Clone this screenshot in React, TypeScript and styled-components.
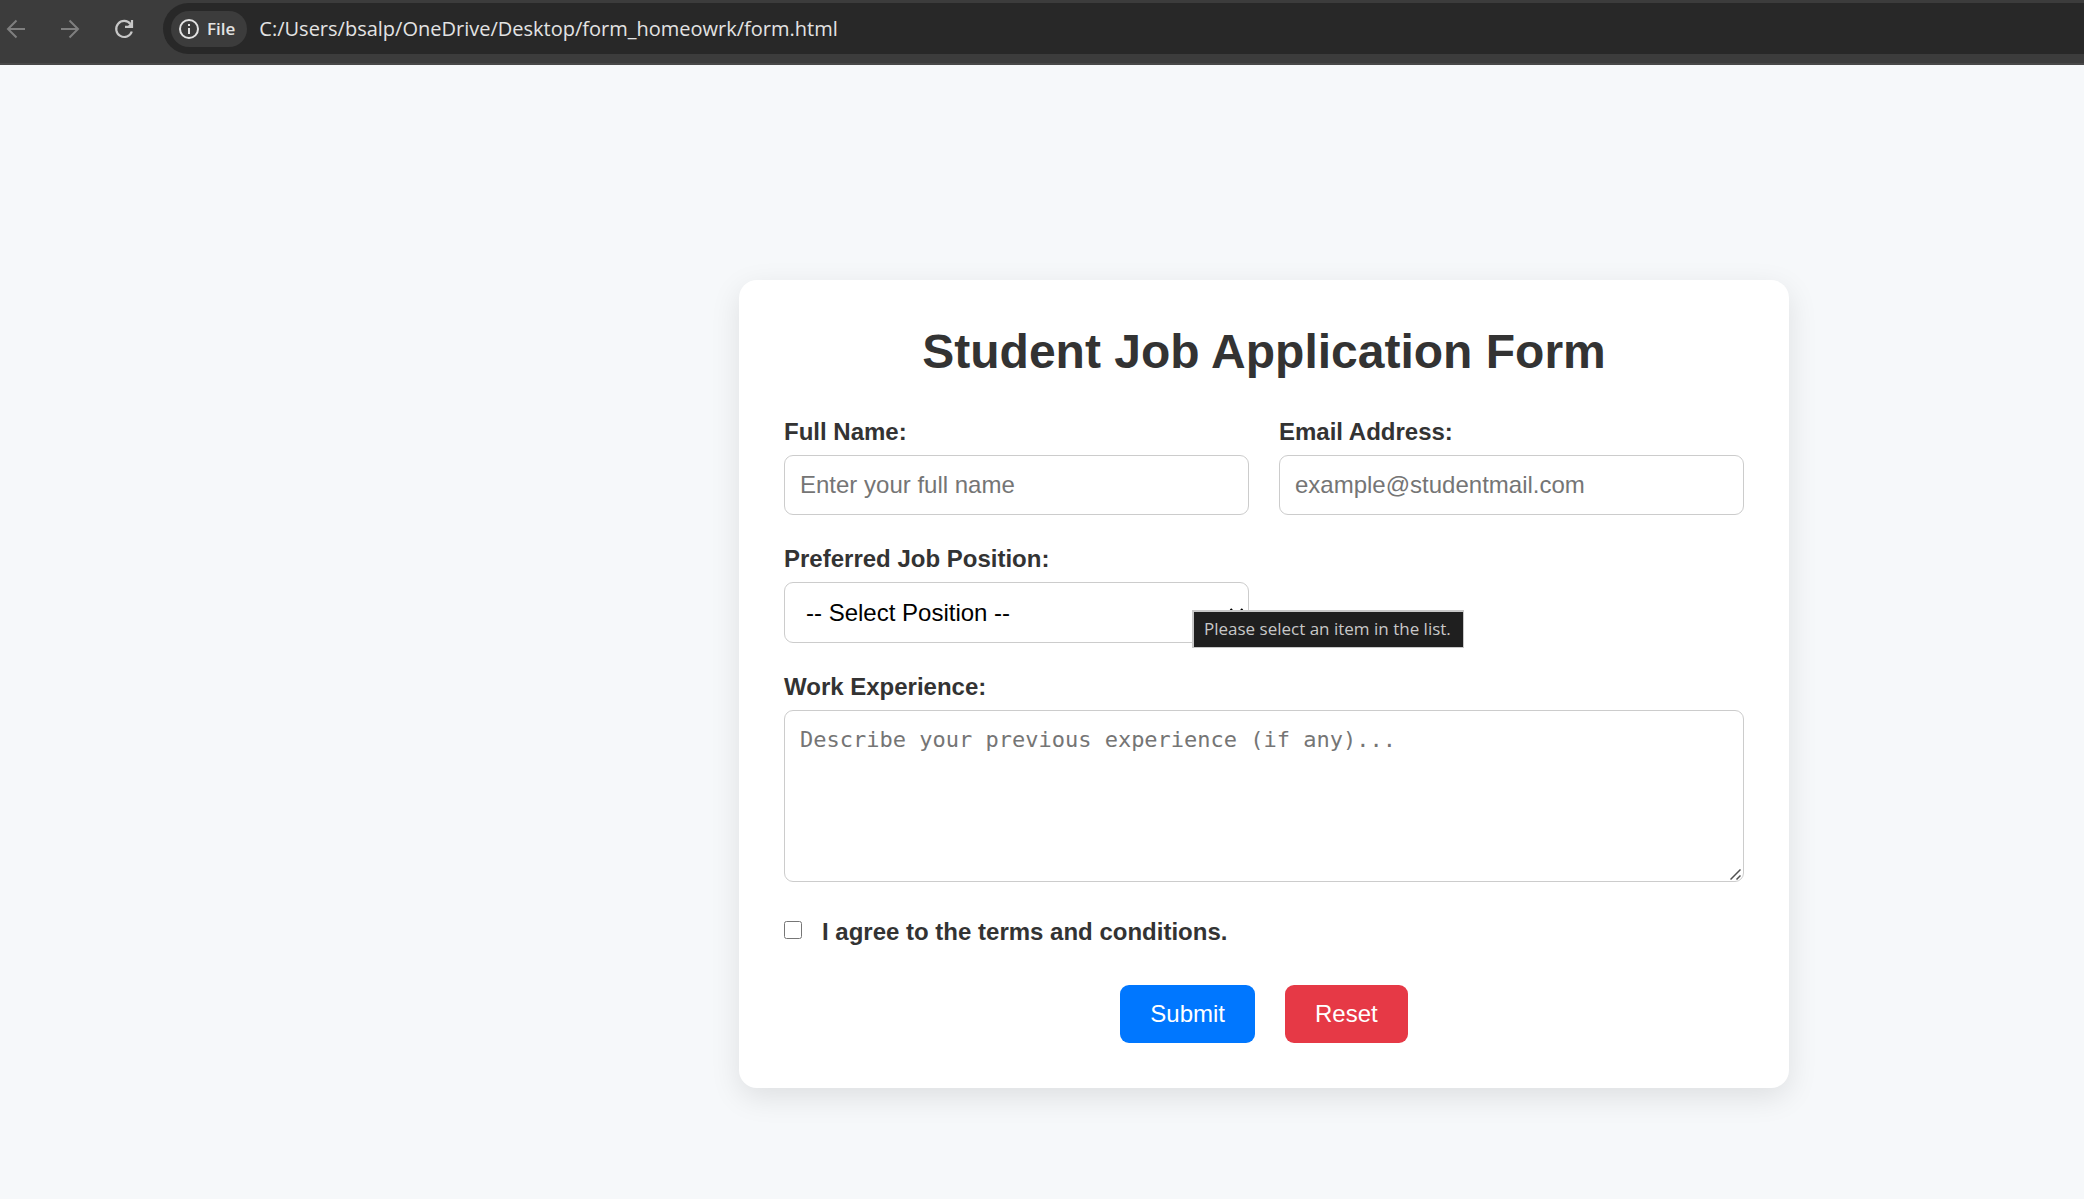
import React from "react";
import styled, { createGlobalStyle, css } from "styled-components";

const sans = `"Liberation Sans", Arial, Helvetica, sans-serif`;
const chromeFont = `"Open Sans", "Noto Sans", sans-serif`;

const GlobalStyle = createGlobalStyle`
  *, *::before, *::after {
    box-sizing: border-box;
  }

  body {
    margin: 0;
    background: #f6f8fa;
    color: #333333;
    font-family: ${sans};
  }
`;

const Page = styled.div`
  display: flex;
  flex-direction: column;
`;

const Toolbar = styled.header`
  display: flex;
  align-items: center;
  height: 65px;
  padding: 3px 0 9px;
  background: #3c3c3c;
  border-bottom: 2px solid #484848;
`;

const NavButtons = styled.nav`
  display: flex;
  flex: none;
  gap: 24px;
  padding: 0 24px 0 1px;
`;

const NavButton = styled.button<{ $active?: boolean }>`
  display: flex;
  align-items: center;
  justify-content: center;
  width: 30px;
  height: 30px;
  padding: 0;
  border: 0;
  background: none;
  color: ${(p) => (p.$active ? "#c7c7c7" : "#7f7f7f")};
`;

const AddressBar = styled.div`
  display: flex;
  flex: 1;
  align-items: center;
  gap: 12px;
  min-width: 0;
  height: 51px;
  padding-left: 8px;
  border-radius: 26px 0 0 26px;
  background: #282828;
`;

const SchemeChip = styled.button`
  display: flex;
  flex: none;
  align-items: center;
  gap: 8px;
  height: 36px;
  padding: 0 12px 0 8px;
  border: 0;
  border-radius: 18px;
  background: #3c3c3c;
  color: #e3e3e3;
  font: 600 17px/24px ${chromeFont};
`;

const AddressInput = styled.input`
  flex: 1;
  min-width: 0;
  height: 36px;
  padding: 0;
  border: 0;
  outline: 0;
  background: none;
  color: #e3e3e3;
  font: 400 20px/28px ${chromeFont};
`;

const Main = styled.main`
  display: flex;
  align-items: flex-start;
  justify-content: center;
  padding: 215px 0 48px 444px;
`;

const Card = styled.form`
  width: 100%;
  max-width: 1050px;
  padding: 45px;
  border-radius: 18px;
  background: #ffffff;
  box-shadow: 0 9px 30px rgba(0, 0, 0, 0.1);
`;

const Title = styled.h1`
  margin: 0 0 39px;
  font-size: 48px;
  line-height: 54px;
  text-align: center;
`;

const Fields = styled.div`
  display: grid;
  grid-template-columns: 1fr 1fr;
  gap: 30px;
`;

const Field = styled.div<{ $wide?: boolean }>`
  display: flex;
  flex-direction: column;
  gap: 9px;
  grid-column: ${(p) => (p.$wide ? "1 / -1" : "auto")};
`;

const Label = styled.label`
  font-size: 24px;
  font-weight: 700;
  line-height: 28px;
`;

const control = css`
  display: block;
  width: 100%;
  margin: 0;
  border: 1px solid #cccccc;
  border-radius: 9px;
  background: #ffffff;
  font-family: ${sans};
  font-size: 24px;

  &::placeholder {
    color: #757575;
    opacity: 1;
  }
`;

const TextInput = styled.input`
  ${control}
  height: 60px;
  padding: 0 15px;
`;

const ControlBox = styled.div`
  position: relative;
`;

const Select = styled.select`
  ${control}
  height: 61px;
  padding: 0 30px 0 21px;
  appearance: none;
  color: #000000;
`;

const SelectArrow = styled.svg`
  position: absolute;
  top: 25px;
  right: 5px;
  pointer-events: none;
`;

const Tooltip = styled.div`
  position: absolute;
  top: 28px;
  left: 408px;
  height: 38px;
  padding: 0 12px 0 10px;
  border: solid #c8c8c8;
  border-width: 2px 1px 1px 2px;
  background: #1f1f1f;
  color: #c8c8c8;
  font: 400 17px/34px ${chromeFont};
  white-space: nowrap;
`;

const TextArea = styled.textarea`
  ${control}
  height: 172px;
  padding: 15px;
  font-family: "DejaVu Sans Mono", monospace;
  font-size: 22px;
  line-height: 28px;
  resize: vertical;

  &::-webkit-resizer {
    background: transparent;
  }
`;

const ResizeGrip = styled.svg`
  position: absolute;
  right: 3px;
  bottom: 2px;
  pointer-events: none;
`;

const Consent = styled.div`
  display: flex;
  align-items: flex-start;
  gap: 20px;
  grid-column: 1 / -1;
  padding: 6px 0 9px;
`;

const Checkbox = styled.input`
  flex: none;
  width: 18px;
  height: 18px;
  margin: 3px 0 0;
`;

const Actions = styled.div`
  display: flex;
  justify-content: center;
  gap: 30px;
  grid-column: 1 / -1;
`;

const ActionButton = styled.button<{ $color: string }>`
  height: 58px;
  padding: 0 30px;
  border: 0;
  border-radius: 9px;
  background: ${(p) => p.$color};
  color: #ffffff;
  font: 400 24px/28px ${sans};
  cursor: pointer;
`;

const positions = ["-- Select Position --"];

const BackIcon = () => (
  <svg width="20" height="20" viewBox="0 0 20 20" fill="none" stroke="currentColor" strokeWidth="2" aria-hidden="true">
    <path d="M19 10H2.5M10.5 1.5L2 10l8.500 8.500" />
  </svg>
);

const ForwardIcon = () => (
  <svg width="20" height="20" viewBox="0 0 20 20" fill="none" stroke="currentColor" strokeWidth="2" aria-hidden="true">
    <path d="M1 10h16.500M9.500 1.500L18 10l-8.500 8.500" />
  </svg>
);

const ReloadIcon = () => (
  <svg width="20" height="20" viewBox="0 0 20 20" fill="none" stroke="currentColor" strokeWidth="2.200" aria-hidden="true">
    <path d="M17.800 12.500A8 8 0 1 1 16.500 5" />
    <path d="M18 1v6.900h-7" />
    <path d="M18 3v5h-5z" fill="currentColor" stroke="none" />
  </svg>
);

const InfoIcon = () => (
  <svg width="20" height="20" viewBox="0 0 20 20" fill="none" stroke="currentColor" strokeWidth="2" aria-hidden="true">
    <circle cx="10" cy="10" r="9" />
    <path d="M10 9v6M10 5v2" />
  </svg>
);

export default function App() {
  return (
    <Page>
      <GlobalStyle />
      <Toolbar>
        <NavButtons aria-label="History">
          <NavButton type="button" aria-label="Back">
            <BackIcon />
          </NavButton>
          <NavButton type="button" aria-label="Forward">
            <ForwardIcon />
          </NavButton>
          <NavButton type="button" aria-label="Reload" $active>
            <ReloadIcon />
          </NavButton>
        </NavButtons>
        <AddressBar>
          <SchemeChip type="button">
            <InfoIcon />
            File
          </SchemeChip>
          <AddressInput
            aria-label="Address"
            spellCheck={false}
            defaultValue="C:/Users/bsalp/OneDrive/Desktop/form_homeowrk/form.html"
          />
        </AddressBar>
      </Toolbar>

      <Main>
        <Card onSubmit={(e: React.FormEvent) => e.preventDefault()}>
          <Title>Student Job Application Form</Title>
          <Fields>
            <Field>
              <Label htmlFor="name">Full Name:</Label>
              <TextInput id="name" type="text" placeholder="Enter your full name" required />
            </Field>
            <Field>
              <Label htmlFor="email">Email Address:</Label>
              <TextInput id="email" type="email" placeholder="example@studentmail.com" required />
            </Field>
            <Field $wide>
              <Label htmlFor="position">Preferred Job Position:</Label>
              <Fields>
                <ControlBox>
                  <Select id="position" required aria-describedby="position-tip">
                    {positions.map((name) => (
                      <option key={name} value="">
                        {name}
                      </option>
                    ))}
                  </Select>
                  <SelectArrow width="15" height="11" viewBox="0 0 15 11" fill="none" stroke="#000000" strokeWidth="2" aria-hidden="true">
                    <path d="M1.500 2l6 6 6-6" />
                  </SelectArrow>
                  <Tooltip id="position-tip" role="tooltip">
                    Please select an item in the list.
                  </Tooltip>
                </ControlBox>
              </Fields>
            </Field>
            <Field $wide>
              <Label htmlFor="experience">Work Experience:</Label>
              <ControlBox>
                <TextArea id="experience" placeholder="Describe your previous experience (if any)..." />
                <ResizeGrip width="11" height="11" viewBox="0 0 11 11" stroke="#505050" strokeWidth="1.500" aria-hidden="true">
                  <path d="M0.500 10.500l10-10M6.500 10.500l4-4" />
                </ResizeGrip>
              </ControlBox>
            </Field>
            <Consent>
              <Checkbox id="terms" type="checkbox" required />
              <Label htmlFor="terms">I agree to the terms and conditions.</Label>
            </Consent>
            <Actions>
              <ActionButton type="submit" $color="#0077ff">
                Submit
              </ActionButton>
              <ActionButton type="reset" $color="#e63946">
                Reset
              </ActionButton>
            </Actions>
          </Fields>
        </Card>
      </Main>
    </Page>
  );
}
